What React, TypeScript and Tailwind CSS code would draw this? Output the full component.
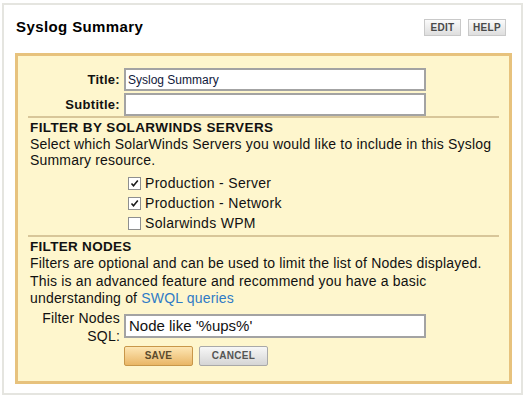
import React from "react";

const font = { fontFamily: '"Liberation Sans", Arial, sans-serif' };

function Check({ checked }: { checked: boolean }) {
  return (
    <span className="inline-flex h-[13px] w-[13px] items-center justify-center border border-[#8e8f8f] bg-white shrink-0">
      {checked && (
        <svg width="9" height="9" viewBox="0 0 9 9">
          <path d="M1.5 4.5 L3.5 6.8 L7.8 1.6" fill="none" stroke="#1b1b1b" strokeWidth="1.6" />
        </svg>
      )}
    </span>
  );
}

function HeadBtn({ label, w }: { label: string; w: string }) {
  return (
    <button
      type="button"
      className={`${w} h-[17px] border border-[#c9c9c9] bg-gradient-to-b from-[#fbfbfb] to-[#dedede] text-[10px] font-bold text-[#4a4a4a] leading-none tracking-[0.3px]`}
    >
      {label}
    </button>
  );
}

export default function App() {
  const servers = [
    { label: "Production - Server", checked: true },
    { label: "Production - Network", checked: true },
    { label: "Solarwinds WPM", checked: false },
  ];

  return (
    <div className="w-[526px] h-[397px] bg-white pl-[2px] pt-[3px]" style={font}>
      <div className="w-[521px] h-[392px] border-2 border-[#e5e5e0] bg-white">
        {/* header */}
        <div className="flex justify-between items-start pl-[12px] pr-[15px] pt-[13px] h-[48px]">
          <div className="text-[15px] font-bold text-black tracking-[0.4px] leading-[18px]">Syslog Summary</div>
          <div className="flex gap-[7px] pt-[1px]">
            <HeadBtn label="EDIT" w="w-[37px]" />
            <HeadBtn label="HELP" w="w-[38px]" />
          </div>
        </div>

        {/* edit box */}
        <div className="ml-[11px] w-[497px] h-[331px] border-[3px] border-[#e7c27d] bg-[#fef6cd] px-[10px] pt-[12px] text-[14px] text-[#111]">
          <div className="flex flex-col gap-[2px]">
            <div className="flex items-center">
              <div className="w-[96px] pr-[4px] text-right font-bold text-[13px] tracking-[0.3px]">Title:</div>
              <input
                defaultValue="Syslog Summary"
                className="w-[302px] h-[23px] border-2 border-[#a3a3a3] bg-white px-[2px] text-[12px] text-[#10183a] outline-none"
                style={font}
              />
            </div>
            <div className="flex items-center">
              <div className="w-[96px] pr-[4px] text-right font-bold text-[13px] tracking-[0.3px]">Subtitle:</div>
              <input
                className="w-[302px] h-[23px] border-2 border-[#a3a3a3] bg-white px-[2px] text-[12px] outline-none"
                style={font}
              />
            </div>
          </div>

          <div className="h-[2px] bg-[#d8c699]" />

          <div className="pl-[2px] pt-[2px] leading-[16px]">
            <div className="font-bold text-[13.5px] tracking-[0.4px]">FILTER BY SOLARWINDS SERVERS</div>
            <div className="tracking-[0.18px]">
              Select which SolarWinds Servers you would like to include in this Syslog Summary resource.
            </div>
          </div>

          <div className="flex flex-col gap-[7px] pl-[100px] pt-[9px] pb-[5px]">
            {servers.map((s) => (
              <label key={s.label} className="flex items-center gap-[4px] h-[13px] tracking-[0.3px]">
                <Check checked={s.checked} />
                <span>{s.label}</span>
              </label>
            ))}
          </div>

          <div className="h-[2px] bg-[#d8c699]" />

          <div className="pl-[2px] pt-[2px]">
            <div className="font-bold text-[13.5px] tracking-[0.3px] leading-[16px]">FILTER NODES</div>
            <div className="tracking-[0.18px] leading-[17.5px]">
              Filters are optional and can be used to limit the list of Nodes displayed.
              This is an advanced feature and recommend you have a basic understanding of{" "}
              <a href="#" className="text-[#2f7bc6]">SWQL queries</a>
            </div>
          </div>

          <div className="flex items-start pt-[1px]">
            <div className="w-[96px] pr-[4px] text-right leading-[18px] tracking-[0.2px]">
              Filter Nodes
              <br />
              SQL:
            </div>
            <input
              defaultValue="Node like '%ups%'"
              className="mt-[5px] w-[302px] h-[24px] border-2 border-[#a3a3a3] bg-white px-[3px] text-[15px] text-[#111] outline-none"
              style={font}
            />
          </div>

          <div className="flex gap-[6px] pl-[96px] pt-[1px]">
            <button
              type="button"
              className="w-[69px] h-[20px] rounded-[2px] border border-[#c8974a] bg-gradient-to-b from-[#fde6b3] to-[#e9b665] text-[10px] font-bold text-[#5b4a2c] tracking-[0.3px]"
            >
              SAVE
            </button>
            <button
              type="button"
              className="w-[69px] h-[20px] rounded-[2px] border border-[#a9a9a9] bg-gradient-to-b from-[#f7f7f7] to-[#d5d5d5] text-[10px] font-bold text-[#555] tracking-[0.3px]"
            >
              CANCEL
            </button>
          </div>
        </div>
      </div>
    </div>
  );
}
